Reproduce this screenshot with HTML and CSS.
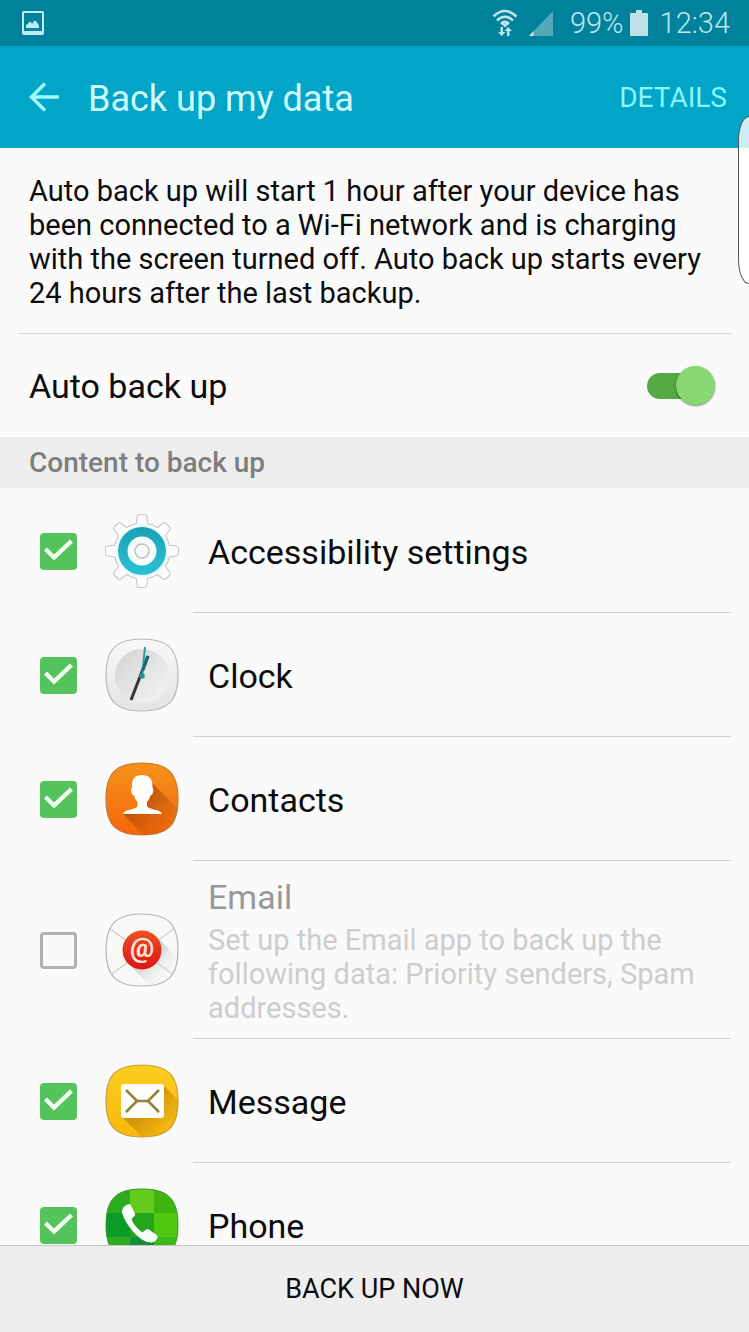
FILE: index.html
```html
<!DOCTYPE html>
<html lang="en">
<head>
    <meta charset="UTF-8">
    <meta name="viewport" content="width=device-width, initial-scale=1.0">
    <title>Back up my data</title>
    <link rel="stylesheet" href="styles.css">
</head>
<body>
    <div class="status-bar">
        <svg class="status-picture" width="22" height="24" viewBox="0 0 22 24">
            <path fill="#bdeef5" fill-rule="evenodd" d="M2 0h18a2 2 0 0 1 2 2v20a2 2 0 0 1-2 2H2a2 2 0 0 1-2-2V2a2 2 0 0 1 2-2zM2 2v18h18V2z"/>
            <path fill="#bdeef5" d="M4 17v-3l2-1 1-2h2l1 2 2-3h2l2 3 1 2v2z"/>
        </svg>
        <div class="status-right">
            <svg class="wifi" width="26" height="28" viewBox="0 0 26 28">
                <g fill="none" stroke="#bfe4ea" stroke-width="2.6">
                    <path d="M1.5 7.5q11.500-11 23 0"/>
                    <path d="M5 11.500q8-7.500 16 0"/>
                    <path d="M9 15q4-4 8 0"/>
                </g>
                <path fill="#bfe4ea" d="M10 15.500q3-2 6 0l-3 3zM8.500 18h2.500v5h2.500l-3.700 4-3.700-4h2.400zM15 27v-5h-2.500l3.700-4 3.700 4h-2.400v5z"/>
            </svg>
            <svg class="signal" width="24" height="25" viewBox="0 0 24 25">
                <path fill="#53a9ba" d="M24 0v25H0z"/>
                <path fill="#c5e8ee" d="M4.500 20v5H0z"/>
            </svg>
            <span class="percent">99%</span>
            <svg class="battery" width="18" height="26" viewBox="0 0 18 26">
                <path fill="#c0e0e7" d="M1 3h5V0h6v3h5q1 0 1 1v21q0 1-1 1H1q-1 0-1-1V4q0-1 1-1z"/>
            </svg>
            <span class="time">12:34</span>
        </div>
    </div>

    <header class="app-bar">
        <button class="back" aria-label="Back">
            <svg width="30" height="30" viewBox="0 0 30 30" fill="none" stroke="#a4fbff" stroke-width="3.500">
                <path d="M30 15H3M16 1.500L2.500 15L16 28.500"/>
            </svg>
        </button>
        <h1>Back up my data</h1>
        <button class="details">DETAILS</button>
        <div class="edge-handle"></div>
    </header>

    <main class="content">
        <p class="description">Auto back up will start 1 hour after your device has been connected to a Wi-Fi network and is charging with the screen turned off. Auto back up starts every 24 hours after the last backup.</p>

        <label class="auto-row">
            <span class="item-title">Auto back up</span>
            <input class="switch" type="checkbox" role="switch" checked>
        </label>

        <h2 class="section-title">Content to back up</h2>

        <div class="items">
            <label class="item">
                <input class="check" type="checkbox" checked>
                <svg class="icon" viewBox="0 0 74 74">
                    <defs>
                        <linearGradient id="ring" x2="0" y2="1">
                            <stop offset="0" stop-color="#1aa2b8"/>
                            <stop offset="1" stop-color="#2cc0d4"/>
                        </linearGradient>
                        <path id="tooth" d="M27 13q4.500-1.500 4.800-4.500l.8-6Q33 .8 34.500 .8h5q1.500 0 1.900 1.700l.8 6q.3 3 4.800 4.500z"/>
                        <g id="gear">
                            <circle cx="37" cy="37" r="27.500"/>
                            <use href="#tooth"/>
                            <use href="#tooth" transform="rotate(45 37 37)"/>
                            <use href="#tooth" transform="rotate(90 37 37)"/>
                            <use href="#tooth" transform="rotate(135 37 37)"/>
                            <use href="#tooth" transform="rotate(180 37 37)"/>
                            <use href="#tooth" transform="rotate(225 37 37)"/>
                            <use href="#tooth" transform="rotate(270 37 37)"/>
                            <use href="#tooth" transform="rotate(315 37 37)"/>
                        </g>
                    </defs>
                    <use href="#gear" fill="#bbb5b5" stroke="#bbb5b5" stroke-width="1.600"/>
                    <use href="#gear" fill="#fbfcfc"/>
                    <circle cx="37" cy="37" r="26" fill="#e8fafc"/>
                    <circle cx="37" cy="37" r="24" fill="url(#ring)"/>
                    <circle cx="37" cy="37" r="14.500" fill="#f2fcfd"/>
                    <circle cx="37" cy="37" r="7" fill="#f8f8f8" stroke="#c5bcbc" stroke-width="1.400"/>
                </svg>
                <span class="item-body"><span class="item-title">Accessibility settings</span></span>
            </label>

            <label class="item">
                <input class="check" type="checkbox" checked>
                <svg class="icon" viewBox="0 0 74 74">
                    <defs>
                        <path id="tile" d="M37 1C62 1 73 10 73 37S62 73 37 73 1 64 1 37 12 1 37 1z"/>
                        <clipPath id="tile-clip"><use href="#tile"/></clipPath>
                        <linearGradient id="clock-bg" x2="0" y2="1">
                            <stop offset="0" stop-color="#f8f8f8"/>
                            <stop offset="1" stop-color="#e4e4e4"/>
                        </linearGradient>
                        <linearGradient id="clock-face" x2="1" y2="1">
                            <stop offset="0" stop-color="#d2d2d2"/>
                            <stop offset="1" stop-color="#f6f6f6"/>
                        </linearGradient>
                    </defs>
                    <use href="#tile" fill="url(#clock-bg)" stroke="#b9b9b9" stroke-width="1.200"/>
                    <circle cx="37" cy="38" r="27" fill="url(#clock-face)"/>
                    <path d="M43 18L26 62" stroke="#363636" stroke-width="3"/>
                    <path d="M40 9L37 38" stroke="#23a0a4" stroke-width="2"/>
                    <path d="M38 32L43 18" stroke="#1d696d" stroke-width="3"/>
                    <circle cx="37" cy="38" r="2.800" fill="#2a8f92"/>
                </svg>
                <span class="item-body"><span class="item-title">Clock</span></span>
            </label>

            <label class="item">
                <input class="check" type="checkbox" checked>
                <svg class="icon" viewBox="0 0 74 74">
                    <defs>
                        <linearGradient id="contacts-bg" x2="0" y2="1">
                            <stop offset="0" stop-color="#f6921b"/>
                            <stop offset="1" stop-color="#f3660a"/>
                        </linearGradient>
                        <linearGradient id="contacts-shadow" x2="1" y2="1">
                            <stop offset=".3" stop-color="#b04a08"/>
                            <stop offset=".85" stop-color="#b04a08" stop-opacity="0"/>
                        </linearGradient>
                    </defs>
                    <use href="#tile" fill="url(#contacts-bg)" stroke="#c87a35" stroke-width="1.200"/>
                    <g clip-path="url(#tile-clip)">
                        <path fill="url(#contacts-shadow)" opacity=".8" d="M46 20L74 48V74H40L18 52l20-6z"/>
                    </g>
                    <path fill="#fffdfa" d="M37 13c8 0 11 5 10.500 12l1 3-1 4q-1 1-2 1.500-1 4-3.500 6.500v4c2 4 14 3 15 8H18c1-5 13-4 14.500-8v-4q-2.500-2.500-3.500-6.500-1-.5-2-1.500l-1-4 1-3C26.500 18 29 13 37 13z"/>
                </svg>
                <span class="item-body"><span class="item-title">Contacts</span></span>
            </label>

            <label class="item item-disabled">
                <input class="check" type="checkbox" disabled>
                <svg class="icon" viewBox="0 0 74 74">
                    <defs>
                        <linearGradient id="email-dot" x2="0" y2="1">
                            <stop offset="0" stop-color="#ed5022"/>
                            <stop offset="1" stop-color="#dc1414"/>
                        </linearGradient>
                        <linearGradient id="email-shadow" x2="1" y2="1">
                            <stop offset=".3" stop-color="#aaa"/>
                            <stop offset=".8" stop-color="#eee" stop-opacity="0"/>
                        </linearGradient>
                    </defs>
                    <use href="#tile" fill="#f8f8f6" stroke="#b5b5b5" stroke-width="1.200"/>
                    <g clip-path="url(#tile-clip)">
                        <path d="M4 15L70 63M70 15L4 63" stroke="#d3cfcf" stroke-width="1.500"/>
                        <path fill="url(#email-shadow)" opacity=".7" d="M52 24L74 46V74H46L24 51z"/>
                    </g>
                    <circle cx="37" cy="37" r="19.500" fill="url(#email-dot)"/>
                    <text class="at-sign" x="37" y="44" text-anchor="middle">@</text>
                </svg>
                <span class="item-body">
                    <span class="item-title">Email</span>
                    <span class="item-note">Set up the Email app to back up the following data: Priority senders, Spam addresses.</span>
                </span>
            </label>

            <label class="item">
                <input class="check" type="checkbox" checked>
                <svg class="icon" viewBox="0 0 74 74">
                    <defs>
                        <linearGradient id="message-bg" x2="0" y2="1">
                            <stop offset="0" stop-color="#fccd20"/>
                            <stop offset="1" stop-color="#f6b80c"/>
                        </linearGradient>
                        <linearGradient id="message-shadow" x2="1" y2="1">
                            <stop offset=".4" stop-color="#cc8b08"/>
                            <stop offset=".85" stop-color="#cc8b08" stop-opacity="0"/>
                        </linearGradient>
                    </defs>
                    <use href="#tile" fill="url(#message-bg)" stroke="#c5a343" stroke-width="1.200"/>
                    <g clip-path="url(#tile-clip)">
                        <path fill="url(#message-shadow)" opacity=".85" d="M58 21L74 37V74H38L17 53z"/>
                    </g>
                    <rect x="16" y="20" width="43" height="34" rx="3" fill="#fffefa"/>
                    <path fill="none" stroke="#93803d" stroke-width="2.600" d="M21 26l11 11h11l11-11M21 48l11-11M43 37l11 11"/>
                </svg>
                <span class="item-body"><span class="item-title">Message</span></span>
            </label>

            <label class="item">
                <input class="check" type="checkbox" checked>
                <svg class="icon" viewBox="0 0 74 74">
                    <g clip-path="url(#tile-clip)">
                        <path fill="#2cac1e" d="M0 0h74v74H0z"/>
                        <path fill="#62cb1c" d="M25 0h24v25H25z"/>
                        <path fill="#3fb30f" d="M49 0h25v25H49z"/>
                        <path fill="#0c9b28" d="M0 25h25v24H0z"/>
                        <path fill="#24a51b" d="M25 25h24v24H25z"/>
                        <path fill="#51c80f" d="M49 25h25v24H49z"/>
                        <path fill="#168f3a" d="M25 49h24v25H25z"/>
                        <path fill="#3bb91a" d="M49 49h25v25H49z"/>
                    </g>
                    <use href="#tile" fill="none" stroke="#3d9a2c" stroke-width="1"/>
                    <path fill="#f5fffb" d="M18 20q2-3 6-4 1.500 0 2 1.500l4 8q.5 1.500-.5 2.500l-3 3q2.500 7.500 11 13.500l3.500-3q1.500-1 3 0l8 6q1 1 .5 2.500-2 4-6 4.500-9 0-18.500-11T17 24q0-2 1-4z"/>
                </svg>
                <span class="item-body"><span class="item-title">Phone</span></span>
            </label>
        </div>
    </main>

    <button class="backup-button">BACK UP NOW</button>
</body>
</html>
```
FILE: styles.css
```css
* {
    box-sizing: border-box;
}
body {
    margin: 0;
    height: 100vh;
    display: flex;
    flex-direction: column;
    font-family: Roboto, "Liberation Sans", sans-serif;
    color: #0c0c0c;
    background-color: #fafafa;
    overflow: hidden;
}
button {
    font-family: inherit;
    border: none;
    padding: 0;
    background: none;
    cursor: pointer;
}
svg {
    display: block;
    flex: none;
}

/* Status bar */
.status-bar {
    flex: none;
    height: 46px;
    padding: 0 19px 0 22px;
    display: flex;
    align-items: center;
    justify-content: space-between;
    background-color: #00829c;
    color: #bfe6ee;
    font-size: 29px;
    font-weight: 300;
}
.status-right {
    display: flex;
    align-items: center;
}
.signal {
    margin: 0 17px 0 11px;
}
.battery {
    margin: 0 12px 0 6px;
}

/* App bar */
.app-bar {
    position: relative;
    flex: none;
    height: 102px;
    padding: 0 22px 0 29px;
    display: flex;
    align-items: center;
    background-color: #00a5c8;
}
.app-bar h1 {
    flex: 1;
    margin: 0;
    padding: 3px 0 0 29px;
    font-size: 36px;
    font-weight: 400;
    color: #d2fbff;
}
.details {
    font-size: 28px;
    color: #8af6fa;
}
.edge-handle {
    position: absolute;
    top: 70px;
    right: 0;
    width: 11px;
    height: 168px;
    border: 1px solid #555;
    border-right: none;
    border-radius: 11px 0 0 11px / 24px 0 0 24px;
    background: linear-gradient(#c9eff5 31px, #fff 31px);
}

/* Content */
.content {
    flex: 1;
    min-height: 0;
    overflow: hidden;
}
.description {
    margin: 0 18px;
    padding: 26px 11px 23px;
    border-bottom: 1px solid #d6d6d6;
    font-size: 29px;
    line-height: 34px;
}
.auto-row {
    height: 103px;
    padding: 0 34px 0 29px;
    display: flex;
    align-items: center;
    justify-content: space-between;
}
.item-title {
    font-size: 34px;
    line-height: 40px;
}
.section-title {
    margin: 0;
    padding: 0 29px;
    font-size: 28px;
    line-height: 51px;
    font-weight: 500;
    color: #7e7e7e;
    background-color: #eee;
}

/* Switch */
.switch {
    appearance: none;
    position: relative;
    width: 68px;
    height: 40px;
    margin: 0;
}
.switch::before {
    content: "";
    position: absolute;
    top: 7px;
    left: 0;
    width: 60px;
    height: 26px;
    border-radius: 13px;
    background-color: #54a944;
}
.switch::after {
    content: "";
    position: absolute;
    top: 0;
    right: 0;
    width: 39px;
    height: 39px;
    border-radius: 50%;
    background-color: #87d872;
    box-shadow: 0 1px 2px rgba(0,0,0,0.5);
}

/* List of content */
.items {
    padding-top: 1px;
}
.item {
    min-height: 124px;
    padding: 0 18px 0 40px;
    display: flex;
    align-items: center;
}
.check {
    appearance: none;
    flex: none;
    width: 37px;
    height: 37px;
    margin: 0;
    border: 3px solid #b1b1b1;
    border-radius: 4px;
}
.check:checked {
    border: none;
    background-color: #55c35b;
}
.check:checked::before {
    content: "";
    display: block;
    width: 37px;
    height: 37px;
    background-color: #f2fff0;
    clip-path: polygon(4px 18px, 7px 15px, 14px 22px, 30px 7px, 33px 10px, 14px 28px);
}
.icon {
    width: 74px;
    height: 74px;
    margin: 0 14px 0 28px;
}
.item-body {
    flex: 1;
    align-self: stretch;
    padding: 3px 0 0 15px;
    display: flex;
    flex-direction: column;
    justify-content: center;
    border-bottom: 1px solid #d3d3d3;
}
.item-disabled {
    min-height: 178px;
}
.item-disabled .item-title {
    color: #989898;
}
.item-note {
    padding-top: 6px;
    font-size: 29px;
    line-height: 34px;
    color: #cdcdcd;
}
.at-sign {
    font-size: 27px;
    font-weight: 700;
    fill: #ffe5dc;
}

/* Bottom button */
.backup-button {
    flex: none;
    height: 87px;
    border-top: 1px solid #c4c4c4;
    background-color: #eee;
    font-size: 27px;
    color: #0c0c0c;
}
```
